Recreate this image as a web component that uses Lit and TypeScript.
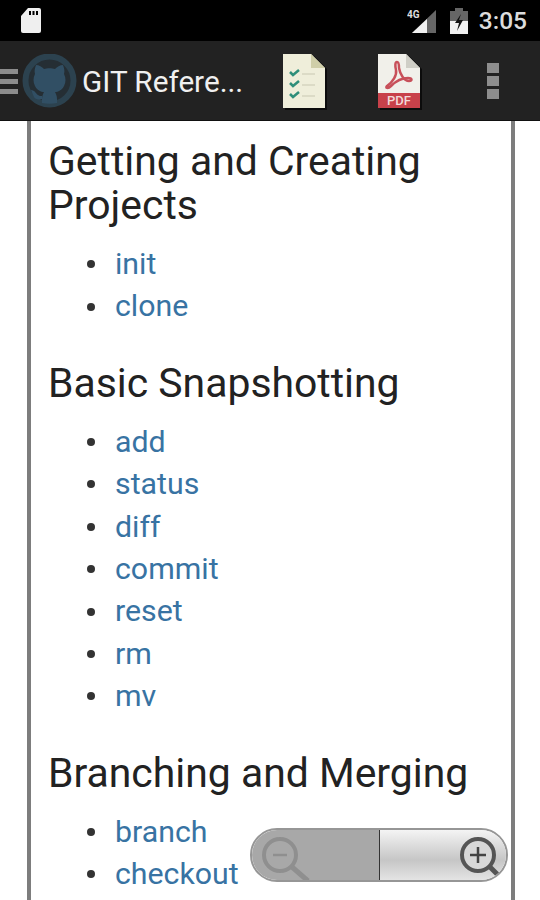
import { LitElement, html, css, svg } from "lit";
import { customElement } from "lit/decorators.js";

const sections = [
  { title: "Getting and Creating Projects", items: ["init", "clone"] },
  { title: "Basic Snapshotting", items: ["add", "status", "diff", "commit", "reset", "rm", "mv"] },
  { title: "Branching and Merging", items: ["branch", "checkout"] },
];

const githubMark = svg`
  <circle cx="27.5" cy="26.5" r="24" fill="#252e34" stroke="#2c424f" stroke-width="6"/>
  <path d="M14 11 C17 11 20 13 22 15 C25 14 30 14 33 15 C35 13 38 11 41 11 C42 14 43 17 42 20 C44 24 44 28 42 32 C40 36 36 38 33 38 C34 40 35 42 35 45 L35 49 C30 50 25 50 20 49 L20 45 C20 42 21 40 22 38 C19 38 15 36 13 32 C11 28 11 24 13 20 C12 17 13 14 14 11 Z" fill="#314f64"/>
  <path d="M9 36 C13 36 14 40 16 41 C17 42 19 42 20 42 L20 45 C16 46 13 45 12 43 Z" fill="#314f64"/>
`;

@customElement("app-root")
export class AppRoot extends LitElement {
  static styles = css`
    :host {
      display: block;
      position: relative;
      width: 540px;
      height: 900px;
      overflow: hidden;
      background: #fff;
      font-family: Roboto, sans-serif;
    }
    .status {
      height: 41px;
      background: #000;
      display: flex;
      align-items: center;
      padding: 0 13px 0 20px;
    }
    .status .sd { display: block; }
    .status .right {
      margin-left: auto;
      display: flex;
      align-items: center;
    }
    .status .clock {
      font-size: 24.5px;
      font-weight: 500;
      margin-left: 11px;
      color: #dcdcdc;
    }
    .signal { margin-right: 13px; display: block; }
    .battery { display: block; }
    .bar {
      height: 80px;
      background: #222;
      border-bottom: 1px solid #111;
      display: flex;
      align-items: center;
      box-sizing: border-box;
    }
    .menu {
      width: 18px;
      height: 25px;
      margin-top: 2px;
      display: flex;
      flex-direction: column;
      justify-content: space-between;
    }
    .menu span { display: block; height: 5px; background: #8c8c8c; }
    .logo { margin-left: 4px; display: block; }
    .title {
      color: #f0f0f0;
      font-size: 29.7px;
      margin: 2px 0 0 5px;
      width: 200px;
      white-space: nowrap;
    }
    .doc { display: block; margin-top: 2px; }
    .doc.pdf { margin-left: 49px; }
    .dots {
      margin-left: 64px;
      display: flex;
      flex-direction: column;
      gap: 3px;
    }
    .dots span { width: 12px; height: 10px; background: #8e8e8e; }
    .page {
      margin: 0 25px 0 27px;
      border-left: 4px solid #7d7d7d;
      border-right: 4px solid #7d7d7d;
      padding: 18px 14px 0 17px;
      height: 779px;
      box-sizing: border-box;
      overflow: hidden;
    }
    h2 {
      margin: 0;
      font-size: 40.9px;
      line-height: 44px;
      font-weight: 400;
      color: #222;
    }
    ul {
      margin: 16px 0 33px;
      padding: 0 0 0 39px;
      list-style: none;
      font-size: 30.3px;
      line-height: 42.4px;
    }
    li {
      display: flex;
      align-items: center;
      gap: 20px;
    }
    li::before {
      content: "";
      width: 8px;
      height: 8px;
      border-radius: 50%;
      background: #333;
    }
    a { color: #3873a3; text-decoration: none; }
    .zoom {
      position: absolute;
      left: 250px;
      top: 828px;
      width: 258px;
      height: 54px;
      border-radius: 27px;
      overflow: hidden;
      display: flex;
      box-sizing: border-box;
      border: 2px solid #969696;
    }
    .zoom .out {
      width: 127px;
      background: #a8a8a8;
      border-right: 1px solid #333;
    }
    .zoom .in {
      flex: 1;
      background: linear-gradient(#f4f4f4, #c6c6c6 60%, #e4e4e4);
      display: flex;
      justify-content: flex-end;
    }
    .zoom svg { display: block; }
  `;

  render() {
    return html`
      <div class="status">
        <svg class="sd" width="22" height="27" viewBox="0 0 22 27">
          <path d="M8 1 H19 Q21 1 21 3 V24 Q21 26 19 26 H3 Q1 26 1 24 V9 Z" fill="#efefef"/>
          <rect x="9" y="4" width="2" height="4" fill="#000"/>
          <rect x="12.5" y="4" width="2" height="4" fill="#000"/>
          <rect x="16" y="4" width="2" height="4" fill="#000"/>
        </svg>
        <div class="right">
          <svg class="signal" width="30" height="26" viewBox="0 0 30 26">
            <path d="M29 2 V25 H5 Z" fill="#666"/>
            <path d="M20 11 V25 H5 Z" fill="#f0f0f0"/>
            <text x="0" y="10" font-size="10" font-weight="700" fill="#ddd" font-family="Roboto">4G</text>
          </svg>
          <svg class="battery" width="18" height="26" viewBox="0 0 18 26">
            <rect x="5" y="0" width="8" height="4" fill="#666"/>
            <rect x="0" y="3" width="18" height="23" fill="#666"/>
            <rect x="0" y="13" width="18" height="13" fill="#f0f0f0"/>
            <path d="M11 6 L5 15 H9 L7 23 L13 12 H9 Z" fill="#111"/>
          </svg>
          <span class="clock">3:05</span>
        </div>
      </div>
      <div class="bar">
        <div class="menu"><span></span><span></span><span></span></div>
        <svg class="logo" width="55" height="54" viewBox="0 0 55 54">${githubMark}</svg>
        <span class="title">GIT Refere...</span>
        <svg class="doc" width="46" height="58" viewBox="0 0 46 58">
          <path d="M3 3 H32 L45 16 V57 H3 Z" fill="#0c0c0c"/>
          <path d="M1 1 H29 L43 15 V55 H1 Z" fill="#efeeda"/>
          <path d="M29 1 L43 15 H29 Z" fill="#cfcea8"/>
          <g fill="none" stroke="#2f8f7a" stroke-width="2.5">
            <path d="M8 19 L11 22 L17 17"/>
            <path d="M8 30 L11 33 L17 28"/>
            <path d="M8 41 L11 44 L17 39"/>
          </g>
          <g stroke="#d6d5bf" stroke-width="1.5">
            <path d="M20 21 H33"/><path d="M20 32 H33"/><path d="M20 43 H33"/>
          </g>
        </svg>
        <svg class="doc pdf" width="46" height="58" viewBox="0 0 46 58">
          <path d="M3 3 H32 L45 16 V57 H3 Z" fill="#0c0c0c"/>
          <path d="M1 1 H29 L43 15 V40 H1 Z" fill="#f1f0ea"/>
          <path d="M29 1 L43 15 H29 Z" fill="#cfcec6"/>
          <rect x="1" y="40" width="42" height="15" fill="#c8414a"/>
          <path d="M20 9 C18 9 18 13 19 17 C20 22 16 29 10 33 C8 35 11 36 14 33 C18 29 24 25 31 25 C35 25 36 28 32 28 C27 28 23 21 22 15 C22 12 22 9 20 9 Z" fill="none" stroke="#c8505a" stroke-width="2.5"/>
          <text x="22" y="52" text-anchor="middle" font-size="13" font-weight="500" fill="#f2d9d9" font-family="Roboto">PDF</text>
        </svg>
        <div class="dots"><span></span><span></span><span></span></div>
      </div>
      <div class="page">
        ${sections.map(
          (s) => html`
            <h2>${s.title}</h2>
            <ul>
              ${s.items.map((i) => html`<li><a>${i}</a></li>`)}
            </ul>
          `
        )}
      </div>
      <div class="zoom">
        <div class="out">
          <svg width="70" height="50" viewBox="0 0 70 50">
            <circle cx="28" cy="25" r="16" fill="none" stroke="#8f8f8f" stroke-width="4"/>
            <path d="M21 25 H35" stroke="#8f8f8f" stroke-width="2.5"/>
            <path d="M40 37 L56 51" stroke="#8f8f8f" stroke-width="5"/>
          </svg>
        </div>
        <div class="in">
          <svg width="60" height="50" viewBox="0 0 60 50">
            <circle cx="32" cy="25" r="16" fill="#d8d8d8" stroke="#555" stroke-width="4"/>
            <path d="M24 25 H40 M32 17 V33" stroke="#444" stroke-width="2.5"/>
            <path d="M44 37 L53 46" stroke="#555" stroke-width="5"/>
          </svg>
        </div>
      </div>
    `;
  }
}
